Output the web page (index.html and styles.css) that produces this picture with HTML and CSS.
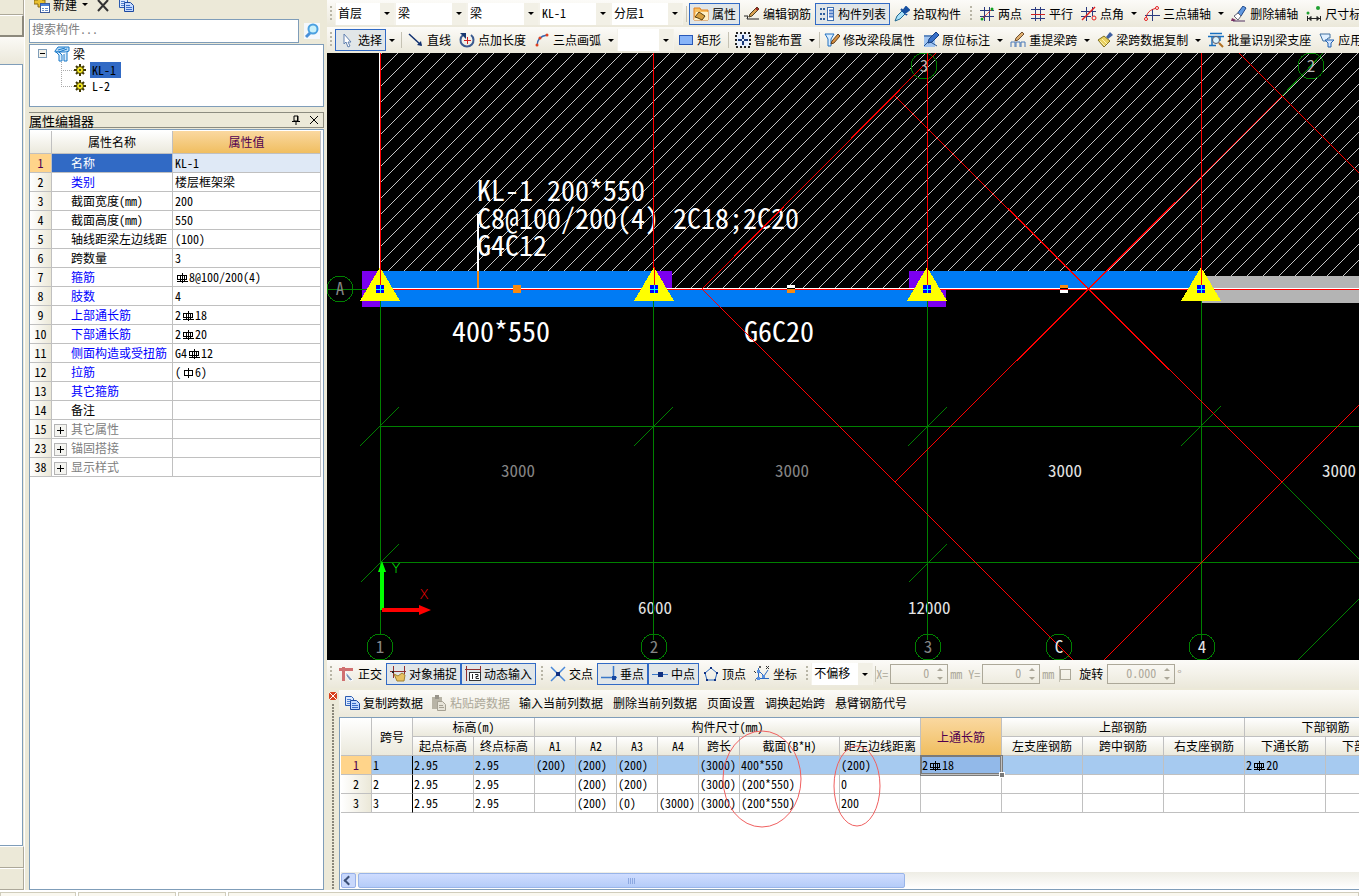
FILE: index.html
```html
<!DOCTYPE html>
<html lang="zh-CN">
<head>
<meta charset="utf-8">
<title>梁 - 属性编辑</title>
<link rel="stylesheet" href="styles.css">
</head>
<body>
<svg class="defs" aria-hidden="true">
  <defs>
    <symbol id="i-new" viewBox="0 0 16 16"><path d="M4 0h4v3h3v4H8v3H4V7H0V3h4z" fill="#e8c030" stroke="#8a6a10"/><rect x="6.500" y="6.500" width="9" height="9" fill="#fff" stroke="#3a5a9a"/><path d="M7 7h8v2H7z" fill="#4a80d8"/><path d="M8 11.500h2m1 0h3M8 13.500h2m1 0h3" stroke="#6a90c8"/></symbol>
    <symbol id="i-del" viewBox="0 0 16 16"><path d="M3 3l10 11M13 3L3 14" stroke="#333" stroke-width="2"/></symbol>
    <symbol id="i-copy" viewBox="0 0 16 16"><path d="M1.500 1.500h6l2 2v7h-8z" fill="#dce9ff" stroke="#2a5ab0"/><path d="M3 4.500h4M3 6.500h4M3 8.500h3" stroke="#5080d0"/><path d="M6.500 5.500h6l3 3v6h-9z" fill="#c4daff" stroke="#1c48a0"/><path d="M8 8.500h4M8 10.500h6M8 12.500h6" stroke="#3a6cc8"/></symbol>
    <symbol id="i-paste" viewBox="0 0 16 16"><rect x="1" y="2" width="10" height="12" fill="#b8b4a6"/><rect x="4" y="0" width="4" height="4" fill="#98948a"/><path d="M6.500 6.500h5l3 3v6h-8z" fill="#e6e3d8" stroke="#a5a193"/><path d="M8 10.500h4M8 12.500h5" stroke="#a5a193"/></symbol>
    <symbol id="i-find" viewBox="0 0 16 16"><rect width="16" height="16" fill="#f4f8fc"/><path d="M6 10l-4 4" stroke="#4a90d8" stroke-width="3"/><circle cx="9" cy="6" r="4.500" fill="#c8f0fa" stroke="#4aa0e0" stroke-width="2"/></symbol>
    <symbol id="i-beam" viewBox="0 0 16 16"><path d="M1 5l3-4h11v4l-3 1H1z" fill="#b8dcf8" stroke="#1878c8"/><path d="M2 6h3l3 3v6H5V9zM13 5v10h-3V8" fill="#d8ecfc" stroke="#1878c8"/><path d="M4 4l7-2M5 6l8-3" stroke="#1878c8"/></symbol>
    <symbol id="i-gear" viewBox="0 0 12 12"><path d="M6 0v12M0 6h12M2 2l8 8M10 2l-8 8" stroke="#403800" stroke-width="2"/><circle cx="6" cy="6" r="3.500" fill="#f4e820" stroke="#403800"/><circle cx="6" cy="6" r="1" fill="#222"/></symbol>
    <symbol id="i-prop" viewBox="0 0 16 16"><path d="M1 2h6l1 2h7v10H1z" fill="#f8c060" stroke="#e08020"/><path d="M3 6h12v8H1z" fill="#fff0c8"/><path d="M2 11l4-5 6 4-3 4-4-2z" fill="#d8a040" stroke="#584010"/></symbol>
    <symbol id="i-edit" viewBox="0 0 16 16"><path d="M0 10h4l-1 3h12" fill="none" stroke="#222"/><path d="M5 11l1-3 7-7 2 2-7 7z" fill="#d8a050" stroke="#504020"/><path d="M12 2l2 2" stroke="#a02020" stroke-width="2"/></symbol>
    <symbol id="i-list" viewBox="0 0 16 16"><path d="M1 3h2m1 0h2M1 8h2m1 0h2M1 13h2m1 0h2" stroke="#3060a0" stroke-width="2"/><rect x="8.500" y="1.500" width="6" height="13" fill="#fff" stroke="#4070b0"/><path d="M10 4.500h4M10 7.500h4M10 10.500h4" stroke="#4878c8" stroke-width="2"/></symbol>
    <symbol id="i-pick" viewBox="0 0 16 16"><path d="M1 15l2-5 5-5 3 3-5 5z" fill="#a8e0f8" stroke="#206890"/><path d="M7 3l6 6M9 5l3-4 3 3-4 3z" fill="#1850a0" stroke="#1850a0" stroke-width="2"/></symbol>
    <symbol id="i-two" viewBox="0 0 16 16"><path d="M5.500 1v14M10.500 1v14M1 4.500h14M1 10.500h14" stroke="#2a3a80"/><path d="M2 14L14 2" stroke="#e02020" stroke-dasharray="2 1"/><circle cx="3" cy="13" r="1.500" fill="#10a020"/><circle cx="13" cy="3" r="1.500" fill="#10a020"/></symbol>
    <symbol id="i-par" viewBox="0 0 16 16"><path d="M5.500 1v14M10.500 1v14" stroke="#2a3a80"/><path d="M1 3.500h14M1 12.500h14" stroke="#2a3a80"/><path d="M1 8.500h14" stroke="#d02020"/></symbol>
    <symbol id="i-ang" viewBox="0 0 16 16"><path d="M5.500 1v14M11.500 1v9M0 5.500h15M0 10.500h10" stroke="#2a3a80"/><path d="M1 14L14 1" stroke="#e02020" stroke-width="1.500"/><circle cx="13" cy="12" r="2" fill="none" stroke="#e02020"/></symbol>
    <symbol id="i-arc3" viewBox="0 0 16 16"><path d="M8.500 3v12M1 9.500h15" stroke="#2a3a80"/><path d="M2 14C2 7 6 3 14 2" fill="none" stroke="#e02020"/><circle cx="2" cy="13" r="1.500" fill="#fff" stroke="#e02020"/><circle cx="13" cy="2" r="1.500" fill="#fff" stroke="#e02020"/></symbol>
    <symbol id="i-erase" viewBox="0 0 16 16"><path d="M6 8l6-8 3 2-5 8z" fill="#6098e0" stroke="#20488a"/><path d="M3 10l4-3 3 3-3 4z" fill="#fff" stroke="#667"/><path d="M1 12l4 2-2 1H0z" fill="#803060"/><path d="M2 15h12" stroke="#503060"/></symbol>
    <symbol id="i-dim" viewBox="0 0 16 16"><path d="M1.500 10v5M14.500 10v5M2 12.500h12M3 12.500l2-2v4zM13 12.500l-2-2v4z" stroke="#222" fill="#222"/><circle cx="2" cy="7" r="1.500" fill="#20a030"/><circle cx="12" cy="2" r="2" fill="#20a030"/></symbol>
    <symbol id="i-cur" viewBox="0 0 16 16"><path d="M5 2v10l2-2 2 5 2-1-2-4h3z" fill="#fff" stroke="#6080b0"/></symbol>
    <symbol id="i-line" viewBox="0 0 16 16"><path d="M1 2l12 11" stroke="#103070" stroke-width="1.500"/><path d="M14 14l-5-1 4-4z" fill="#103070"/></symbol>
    <symbol id="i-rot" viewBox="0 0 16 16"><path d="M12 3a6.500 6.500 0 1 1-8 0" fill="none" stroke="#3a5a90" stroke-width="2"/><path d="M1 1h6v6z" fill="#183870"/><path d="M8.500 5v7M5 8.500h7" stroke="#d02020"/></symbol>
    <symbol id="i-arc" viewBox="0 0 16 16"><path d="M3 14C3 8 6 4 13 3" fill="none" stroke="#3868b0" stroke-width="1.500"/><circle cx="3" cy="13" r="1.500" fill="#e04020"/><circle cx="6" cy="6" r="1.500" fill="#e04020"/><circle cx="13" cy="3" r="1.500" fill="#e04020"/></symbol>
    <symbol id="i-rect" viewBox="0 0 16 16"><rect x="1.500" y="3.500" width="13" height="9" fill="#88b4f8" stroke="#2858b8"/></symbol>
    <symbol id="i-smart" viewBox="0 0 16 16"><rect x="1" y="1" width="14" height="14" fill="#e8f0fc" stroke="#222" stroke-width="2" stroke-dasharray="2 2"/><path d="M8 3v4M8 9v4M3 8h4M9 8h4" stroke="#183878" stroke-width="2"/></symbol>
    <symbol id="i-mod" viewBox="0 0 16 16"><path d="M1 2h9l-3 5v7H4V7z" fill="#d8ecff" stroke="#2070c0"/><path d="M7 12l1-3 6-7 2 2-6 7z" fill="#d89040" stroke="#604020"/></symbol>
    <symbol id="i-mark" viewBox="0 0 16 16"><path d="M1 3h11v12H1z" fill="#a0c4f0"/><path d="M1 14l5-5 8 5M1 4h8" stroke="#205090" fill="none"/><path d="M5 11l1-4 7-7 3 3-7 7z" fill="#3870c8" stroke="#184080"/></symbol>
    <symbol id="i-span" viewBox="0 0 16 16"><path d="M1 15v-5h4v5M6 15v-5h4v5M11 15v-5h4v5" fill="none" stroke="#4878b8"/><path d="M5 9l1-3 6-6 2 2-6 6z" fill="#e0b070" stroke="#705030"/></symbol>
    <symbol id="i-brush" viewBox="0 0 16 16"><path d="M9 5l4-5 3 3-5 4z" fill="#4060a0"/><path d="M7 4l6 5-6 6-6-7z" fill="#e8d060" stroke="#807020"/><path d="M3 9l5 5M5 7l5 5" stroke="#fff4b0"/></symbol>
    <symbol id="i-batch" viewBox="0 0 16 16"><path d="M2 1.500h12M0 4.500h16M4 5v8M12 5v4M1 13.500h7" stroke="#1870c0" stroke-width="1.500"/><circle cx="8" cy="8" r="3.500" fill="#d8f4ff" stroke="#556"/><path d="M11 11l4 4" stroke="#b07020" stroke-width="2"/></symbol>
    <symbol id="i-apply" viewBox="0 0 16 16"><path d="M1 2h10v4H9l-2 3H4z" fill="#e0f0ff" stroke="#4070a0"/><path d="M6 8h9l-3 3v4H9v-4z" fill="#d0e4ff" stroke="#2060b0"/></symbol>
    <symbol id="i-ortho" viewBox="0 0 16 16"><path d="M0 3.500h14M4.500 1v14" stroke="#d07070" stroke-width="3"/><path d="M7 6l7 8-3 1-4-5z" fill="#8098b8" stroke="#fff"/></symbol>
    <symbol id="i-snap" viewBox="0 0 16 16"><path d="M3.500 0v12M14.500 0v8M0 5.500h16" stroke="#903030"/><path d="M4 8l4 2 4-3 3 2-1 6H7z" fill="#e8c060" stroke="#a08030"/><rect x="2" y="5" width="2" height="2" fill="#222"/></symbol>
    <symbol id="i-dyn" viewBox="0 0 16 16"><path d="M1.500 0v15M15.500 0v6M0 3.500h16" stroke="#903030"/><rect x="4.500" y="6.500" width="11" height="8" fill="#fff" stroke="#333"/><path d="M7.500 8v5M10 8.500h3v2h-2v2h3" stroke="#222" fill="none"/></symbol>
    <symbol id="i-int" viewBox="0 0 16 16"><path d="M1 1l14 14M15 1L1 15" stroke="#4a88d8" stroke-width="1.500"/><rect x="6" y="6" width="4" height="4" fill="#103080"/></symbol>
    <symbol id="i-perp" viewBox="0 0 16 16"><path d="M12.500 0v11M0 11.500h16" stroke="#3a78c8" stroke-width="1.500"/><rect x="11" y="10" width="4" height="4" fill="#1848a0"/></symbol>
    <symbol id="i-mid" viewBox="0 0 16 16"><path d="M0 8.500h16" stroke="#3a78c8"/><rect x="6" y="6" width="5" height="5" fill="#103080"/></symbol>
    <symbol id="i-vert" viewBox="0 0 16 16"><path d="M8 2l6 5-2 7H4L2 7z" fill="none" stroke="#2a68c0"/><path d="M7 1h2v2H7zM13 6h2v2h-2zM1 6h2v2H1zM3 13h2v2H3zM11 13h2v2h-2z" fill="#103080"/></symbol>
    <symbol id="i-coord" viewBox="0 0 16 16"><path d="M4.500 2v12M2 12.500h13M5 5l5 5 4-6" fill="none" stroke="#2a68c0"/><path d="M3 4h3v3H3zM8 9h3v3H8zM3 11h3v3H3z" fill="#5890e0"/><circle cx="6" cy="1" r="1" fill="#333"/><path d="M12 0l3 3M15 0l-3 3M0 5l2 2M1 14h1" stroke="#333"/></symbol>
    <symbol id="i-pin" viewBox="0 0 10 10"><path d="M3 1h4v5H3zM1 6.500h8M5 7v3M6.500 1v5" fill="none" stroke="#000"/></symbol>
    <symbol id="i-x" viewBox="0 0 10 10"><path d="M1 1l8 8M9 1L1 9" stroke="#000"/></symbol>
    <symbol id="i-bar" viewBox="0 0 12 12"><path d="M1.500 3.500h9v4h-9zM6.500 1v10M1 9.500h11M4.500 3.500v6M8.500 3.500v6" fill="none" stroke="#000" shape-rendering="crispEdges"/></symbol>
    <symbol id="i-phi" viewBox="0 0 12 12"><path d="M2.500 3.500h8v5h-8zM6.500 1v10" fill="none" stroke="#000" shape-rendering="crispEdges"/></symbol>
    <symbol id="support" viewBox="0 0 40 34"><path d="M20 0l20 34H0z" fill="#ff0" shape-rendering="crispEdges"/><path d="M20.500 0v20" stroke="#f00"/><rect x="16" y="18" width="8" height="8" fill="#00f"/><path d="M16 22.500h8M20.500 18v8" stroke="#0ff"/></symbol>
    <pattern id="hatch" width="16" height="16" patternUnits="userSpaceOnUse"><path d="M-1 4L4 -1M2 17L17 2" stroke="#c4c4c4" shape-rendering="crispEdges"/></pattern>
  </defs>
</svg>

<div class="app">
  <div class="main">
    <div class="rail">
      <div class="rail-top"></div>
      <div class="rail-btn"></div>
      <div class="rail-head"></div>
      <div class="rail-body"></div>
      <div class="rail-tab"></div>
      <div class="rail-tab"></div>
    </div>

    <aside class="side">
      <div class="side-tools">
        <button class="flat"><svg class="ic"><use href="#i-new"/></svg>新建<i class="tri"></i></button>
        <button class="flat" aria-label="删除"><svg class="ic"><use href="#i-del"/></svg></button>
        <button class="flat" aria-label="复制"><svg class="ic"><use href="#i-copy"/></svg></button>
      </div>
      <div class="search">
        <input type="text" placeholder="搜索构件..." aria-label="搜索构件">
        <button class="flat" aria-label="搜索"><svg class="ic"><use href="#i-find"/></svg></button>
      </div>
      <div class="tree">
        <div class="node root"><span class="minus"></span><svg class="ic"><use href="#i-beam"/></svg><span>梁</span></div>
        <ul class="kids">
          <li class="node"><i class="twig"></i><svg class="ic12"><use href="#i-gear"/></svg><span class="name on">KL-1</span></li>
          <li class="node"><i class="twig"></i><svg class="ic12"><use href="#i-gear"/></svg><span class="name">L-2</span></li>
        </ul>
      </div>
      <div class="title"><span>属性编辑器</span><button class="flat" aria-label="固定"><svg class="ic10"><use href="#i-pin"/></svg></button><button class="flat" aria-label="关闭"><svg class="ic10"><use href="#i-x"/></svg></button></div>
      <div class="editor">
        <table class="grid props">
          <colgroup><col class="p-num"><col class="p-name"><col></colgroup>
          <thead><tr><th></th><th>属性名称</th><th class="hot">属性值</th></tr></thead>
          <tbody>
            <tr class="cur"><th>1</th><td>名称</td><td>KL-1</td></tr>
            <tr><th>2</th><td class="blue">类别</td><td>楼层框架梁</td></tr>
            <tr><th>3</th><td>截面宽度(mm)</td><td>200</td></tr>
            <tr><th>4</th><td>截面高度(mm)</td><td>550</td></tr>
            <tr><th>5</th><td>轴线距梁左边线距</td><td>(100)</td></tr>
            <tr><th>6</th><td>跨数量</td><td>3</td></tr>
            <tr><th>7</th><td class="blue">箍筋</td><td><svg class="ic12"><use href="#i-bar"/></svg>8@100/200(4)</td></tr>
            <tr><th>8</th><td class="blue">肢数</td><td>4</td></tr>
            <tr><th>9</th><td class="blue">上部通长筋</td><td>2<svg class="ic12"><use href="#i-bar"/></svg>18</td></tr>
            <tr><th>10</th><td class="blue">下部通长筋</td><td>2<svg class="ic12"><use href="#i-bar"/></svg>20</td></tr>
            <tr><th>11</th><td class="blue">侧面构造或受扭筋</td><td>G4<svg class="ic12"><use href="#i-bar"/></svg>12</td></tr>
            <tr><th>12</th><td class="blue">拉筋</td><td>(<svg class="ic12"><use href="#i-phi"/></svg>6)</td></tr>
            <tr><th>13</th><td class="blue">其它箍筋</td><td></td></tr>
            <tr><th>14</th><td>备注</td><td></td></tr>
            <tr><th>15</th><td class="fold"><button class="plus" aria-label="展开"></button>其它属性</td><td></td></tr>
            <tr><th>23</th><td class="fold"><button class="plus" aria-label="展开"></button>锚固搭接</td><td></td></tr>
            <tr><th>38</th><td class="fold"><button class="plus" aria-label="展开"></button>显示样式</td><td></td></tr>
          </tbody>
        </table>
      </div>
    </aside>

    <main class="work">
      <div class="bar">
        <i class="grip"></i>
        <label class="combo floor"><select aria-label="楼层"><option>首层</option></select></label>
        <label class="combo"><select aria-label="构件类别"><option>梁</option></select></label>
        <label class="combo"><select aria-label="构件类型"><option>梁</option></select></label>
        <label class="combo"><select aria-label="构件"><option>KL-1</option></select></label>
        <label class="combo"><select aria-label="分层"><option>分层1</option></select></label>
        <i class="sep"></i>
        <button class="tool on"><svg class="ic"><use href="#i-prop"/></svg>属性</button>
        <button class="tool"><svg class="ic"><use href="#i-edit"/></svg>编辑钢筋</button>
        <button class="tool on"><svg class="ic"><use href="#i-list"/></svg>构件列表</button>
        <button class="tool"><svg class="ic"><use href="#i-pick"/></svg>拾取构件</button>
        <i class="grip next"></i>
        <button class="tool"><svg class="ic"><use href="#i-two"/></svg>两点</button>
        <button class="tool"><svg class="ic"><use href="#i-par"/></svg>平行</button>
        <button class="tool"><svg class="ic"><use href="#i-ang"/></svg>点角</button><button class="drop" aria-label="更多"></button>
        <button class="tool"><svg class="ic"><use href="#i-arc3"/></svg>三点辅轴</button><button class="drop" aria-label="更多"></button>
        <button class="tool"><svg class="ic"><use href="#i-erase"/></svg>删除辅轴</button>
        <button class="tool"><svg class="ic"><use href="#i-dim"/></svg>尺寸标注</button>
      </div>
      <div class="bar">
        <i class="grip"></i>
        <button class="tool on"><svg class="ic"><use href="#i-cur"/></svg>选择</button><button class="drop" aria-label="更多"></button>
        <i class="sep"></i>
        <button class="tool"><svg class="ic"><use href="#i-line"/></svg>直线</button>
        <button class="tool"><svg class="ic"><use href="#i-rot"/></svg>点加长度</button>
        <button class="tool"><svg class="ic"><use href="#i-arc"/></svg>三点画弧</button><button class="drop" aria-label="更多"></button>
        <label class="combo small"><select aria-label="画弧方式"><option></option></select></label>
        <button class="tool"><svg class="ic"><use href="#i-rect"/></svg>矩形</button>
        <i class="sep"></i>
        <button class="tool"><svg class="ic"><use href="#i-smart"/></svg>智能布置</button><button class="drop" aria-label="更多"></button>
        <i class="sep tight"></i>
        <button class="tool"><svg class="ic"><use href="#i-mod"/></svg>修改梁段属性</button>
        <button class="tool"><svg class="ic"><use href="#i-mark"/></svg>原位标注</button><button class="drop" aria-label="更多"></button>
        <button class="tool"><svg class="ic"><use href="#i-span"/></svg>重提梁跨</button><button class="drop" aria-label="更多"></button>
        <button class="tool"><svg class="ic"><use href="#i-brush"/></svg>梁跨数据复制</button><button class="drop" aria-label="更多"></button>
        <button class="tool"><svg class="ic"><use href="#i-batch"/></svg>批量识别梁支座</button>
        <button class="tool"><svg class="ic"><use href="#i-apply"/></svg>应用到同名梁</button>
      </div>

      <div class="canvas">
        <svg class="drawing" role="img" aria-label="梁平面图">
          <g transform="translate(-327 -53)">
            <rect x="380" y="53" width="3000" height="236" fill="url(#hatch)"/>
            <g shape-rendering="crispEdges">
              <path d="M362 271h18v36h-18zM653 271h19v18h-19zM909 271h18v18h-18zM927 289h19v18h-19z" fill="#7b00f0"/>
              <path d="M380 271h273v18h274v18H380zM927 271h274v18H927z" fill="#007bf4"/>
              <path d="M1201 276h2200v27H1201z" fill="#b4b4b4"/>
            </g>
            <g class="label">
              <text x="477" y="201">KL-1 200*550</text>
              <text x="477" y="229">C8@100/200(4)</text>
              <text x="673" y="229">2C18;2C20</text>
              <text x="477" y="256">G4C12</text>
              <text x="452" y="342">400*550</text>
              <text x="744" y="342">G6C20</text>
            </g>
            <g class="dim">
              <text x="501" y="477" class="dull">3000</text>
              <text x="775" y="477" class="dull">3000</text>
              <text x="1048" y="477">3000</text>
              <text x="1322" y="477">3000</text>
              <text x="638" y="614">6000</text>
              <text x="908" y="614">12000</text>
            </g>
            <g class="lines green">
              <path d="M380.500 289V634M653.500 289V640M927.500 289V640M1201.500 289V640M327 289.500H380M380 426.500H3000M380 562.500H3000"/>
              <path d="M360 446l39-39M634 446l39-39M908 446l39-39M1181 446l40-40M361 582l38-38M909 582l38-38M1282 96l41-43M1282 482l400 400M1359 599l-61 61"/>
              <circle cx="380" cy="647" r="13"/><circle cx="654" cy="647" r="13"/><circle cx="928" cy="647" r="13"/><circle cx="1059" cy="647" r="13"/><circle cx="1202" cy="647" r="13"/><circle cx="340" cy="289" r="13"/><circle cx="924" cy="66" r="13"/><circle cx="1311" cy="66" r="13"/>
            </g>
            <path class="lines white" d="M379.500 53V289M380 288.500H3000"/>
            <path class="lines white" stroke-width="2" d="M478 214V271"/>
            <path class="lines orange" stroke-width="2" d="M478 271V288"/>
            <path class="lines red" d="M380.500 53V289M653.500 53V289M927.500 53V289M1201.500 53V289M380 289.500H3000M936 53L702 289L1073 660M895 96L1282 482M1239 53l400 400M1282 96L895 482M1359 405L1104 660"/>
            <g class="dim mid">
              <text x="340" y="295" class="dull">A</text>
              <text x="380" y="653" class="dull">1</text>
              <text x="654" y="653" class="dull">2</text>
              <text x="928" y="653" class="dull">3</text>
              <text x="1059" y="653">C</text>
              <text x="1202" y="653">4</text>
              <text x="924" y="72" class="pale">3</text>
              <text x="1311" y="72" class="pale">2</text>
            </g>
            <use href="#support" x="360" y="267" width="40" height="34"/>
            <use href="#support" x="634" y="267" width="40" height="34"/>
            <use href="#support" x="907" y="267" width="40" height="34"/>
            <use href="#support" x="1181" y="267" width="40" height="34"/>
            <path d="M513 285h8v8h-8zM787 289h8v4h-8zM1060 285h8v3h-8z" fill="#f88a10"/>
            <path d="M787 285h8v3h-8zM1060 290h8v3h-8z" fill="#fff"/>
            <path d="M787 288h8v1h-8zM1060 288h8v1h-8z" fill="#000"/>
            <path d="M380 570h4v40h-4zM382 561l4 11h-8z" fill="#0f0"/>
            <path d="M382 608h37v4h-37zM431 610l-12-5v10z" fill="#f00"/>
            <g class="axis"><text x="396" y="573" fill="#0f0">Y</text><text x="424" y="599" fill="#f00">X</text></g>
          </g>
        </svg>
      </div>

      <div class="snap">
        <i class="grip"></i>
        <button class="tool"><svg class="ic"><use href="#i-ortho"/></svg>正交</button>
        <button class="tool on"><svg class="ic"><use href="#i-snap"/></svg>对象捕捉</button>
        <button class="tool on"><svg class="ic"><use href="#i-dyn"/></svg>动态输入</button>
        <i class="grip next"></i>
        <button class="tool"><svg class="ic"><use href="#i-int"/></svg>交点</button>
        <button class="tool on"><svg class="ic"><use href="#i-perp"/></svg>垂点</button>
        <button class="tool on"><svg class="ic"><use href="#i-mid"/></svg>中点</button>
        <button class="tool"><svg class="ic"><use href="#i-vert"/></svg>顶点</button>
        <button class="tool"><svg class="ic"><use href="#i-coord"/></svg>坐标</button>
        <i class="grip next"></i>
        <label class="combo shift"><select aria-label="偏移"><option>不偏移</option></select></label>
        <i class="sep tight"></i>
        <label class="off">X=<span class="spin"><input type="text" value="0" disabled></span>mm</label>
        <label class="off last">Y=<span class="spin"><input type="text" value="0" disabled></span>mm</label>
        <i class="sep tight"></i>
        <label class="turn"><input type="checkbox">旋转</label>
        <label class="off"><span class="spin wide"><input type="text" value="0.000" aria-label="旋转角度" disabled></span>°</label>
      </div>

      <section class="dock">
        <div class="dock-grip"><button class="close" aria-label="关闭"></button><i></i></div>
        <div class="dock-main">
          <div class="dock-tools">
            <button class="tool"><svg class="ic"><use href="#i-copy"/></svg>复制跨数据</button>
            <button class="tool" disabled><svg class="ic"><use href="#i-paste"/></svg>粘贴跨数据</button>
            <button class="text">输入当前列数据</button>
            <button class="text">删除当前列数据</button>
            <button class="text">页面设置</button>
            <button class="text">调换起始跨</button>
            <button class="text">悬臂钢筋代号</button>
          </div>
          <div class="sheet">
            <table class="grid spans">
              <colgroup><col class="c30"><col class="c41"><col class="c61"><col class="c61"><col class="c41"><col class="c41"><col class="c41"><col class="c41"><col class="c41"><col class="c100"><col class="c81"><col class="c81"><col class="c81"><col class="c81"><col class="c81"><col class="c81"><col class="c81"></colgroup>
              <thead>
                <tr><th rowspan="2"></th><th rowspan="2">跨号</th><th colspan="2">标高(m)</th><th colspan="7">构件尺寸(mm)</th><th rowspan="2" class="hot">上通长筋</th><th colspan="3">上部钢筋</th><th colspan="2">下部钢筋</th></tr>
                <tr><th>起点标高</th><th>终点标高</th><th>A1</th><th>A2</th><th>A3</th><th>A4</th><th>跨长</th><th>截面(B*H)</th><th>距左边线距离</th><th>左支座钢筋</th><th>跨中钢筋</th><th>右支座钢筋</th><th>下通长筋</th><th>下部钢筋</th></tr>
              </thead>
              <tbody>
                <tr class="cur"><th>1</th><td class="fix">1</td><td>2.95</td><td>2.95</td><td>(200)</td><td>(200)</td><td>(200)</td><td></td><td>(3000)</td><td>400*550</td><td>(200)</td><td class="cell">2<svg class="ic12"><use href="#i-bar"/></svg>18<i class="knob"></i></td><td></td><td></td><td></td><td>2<svg class="ic12"><use href="#i-bar"/></svg>20</td><td></td></tr>
                <tr><th>2</th><td class="fix">2</td><td>2.95</td><td>2.95</td><td></td><td>(200)</td><td>(200)</td><td></td><td>(3000)</td><td>(200*550)</td><td>0</td><td></td><td></td><td></td><td></td><td></td><td></td></tr>
                <tr><th>3</th><td class="fix">3</td><td>2.95</td><td>2.95</td><td></td><td>(200)</td><td>(0)</td><td>(3000)</td><td>(3000)</td><td>(200*550)</td><td>200</td><td></td><td></td><td></td><td></td><td></td><td></td></tr>
              </tbody>
            </table>
            <svg class="rings" aria-hidden="true"><ellipse cx="422" cy="61" rx="39" ry="48"/><ellipse cx="517" cy="68" rx="23" ry="40"/></svg>
            <div class="scroll"><button class="left" aria-label="向左滚动"></button><div class="thumb"></div></div>
          </div>
        </div>
      </section>
    </main>
  </div>
  <footer class="status"><i class="s1"></i><i class="s2"></i><i class="s3"></i><i class="s4"></i></footer>
</div>
</body>
</html>
```
FILE: styles.css
```css
* { box-sizing: border-box; }
body {
  margin: 0;
  background: #ece9d8;
  color: #000;
  font: 12px/18px "Noto Sans CJK SC", "Liberation Mono", sans-serif;
  font-feature-settings: "hwid";
}
button, input, select { font: inherit; font-feature-settings: inherit; color: inherit; }
button { padding: 0; border: 0; background: none; white-space: nowrap; }
ul { list-style: none; margin: 0; padding: 0; }
.defs { position: absolute; width: 0; height: 0; }
.ic { width: 16px; height: 16px; flex: none; }
.ic12 { width: 12px; height: 12px; flex: none; vertical-align: -2px; }
.ic10 { width: 10px; height: 10px; flex: none; }

.app { display: flex; flex-direction: column; height: 100vh; overflow: hidden; }
.main { display: flex; flex: 1; min-height: 0; }

/* left rail */
.rail { width: 25px; flex: none; display: flex; flex-direction: column; border-right: 1px solid #fff; }
.rail-top { height: 15px; border-right: 1px solid #aca899; border-bottom: 1px solid #aca899; }
.rail-btn { height: 22px; border: 2px solid #8c897c; border-width: 1px 2px 2px 0; border-top-color: #fff; }
.rail-head { height: 27px; background: linear-gradient(#fbfaf6, #ebe8da); }
.rail-body { flex: 1; margin-right: 1px; background: #fff; border: 1px solid #7f9db9; border-left: 0; }
.rail-tab { height: 22px; border: 1px solid #aca899; border-left: 0; border-top-color: #fff; }

/* side panel */
.side { width: 302px; flex: none; display: flex; flex-direction: column; padding: 0 3px 0 4px; }
.flat { display: flex; align-items: center; gap: 3px; }
.side-tools { display: flex; gap: 7px; height: 9px; margin-bottom: 10px; padding-left: 5px; align-items: center; }
.tri { margin-left: 2px; border: 3px solid transparent; border-top-color: #000; border-bottom: 0; }
.search { display: flex; height: 24px; gap: 5px; align-items: center; }
.search input { flex: 1; height: 24px; min-width: 0; padding: 0 2px 6px; border: 1px solid #7f9db9; background: #fff; }
.search input::placeholder { color: #808080; }
.search .flat { width: 20px; }
.tree { height: 63px; margin-top: 1px; padding: 0 0 0 8px; background: #fff; border: 1px solid #7f9db9; line-height: 16px; }
.node { display: flex; align-items: center; height: 16px; }
.root { gap: 3px; height: 17px; }
.root .ic { margin-left: 4px; }
.minus { width: 9px; height: 9px; border: 1px solid #7f9db9; background: linear-gradient(#000, #000) center / 5px 1px no-repeat #f4f2ea; }
.kids { margin-left: 23px; }
.twig { width: 13px; height: 9px; flex: none; align-self: flex-start; border: 1px dotted #aaa; border-width: 0 0 1px 1px; }
.node + .node .twig { height: 17px; margin-top: -8px; }
.kids .ic12 { margin-right: 4px; }
.name { width: 31px; flex: none; padding-left: 2px; }
.name.on { background: #316ac5; }
.title { display: flex; align-items: center; gap: 8px; height: 16px; margin-top: 5px; padding-right: 4px; border: 1px solid #8c8c80; border-left: 0; line-height: 13px; }
.title span { flex: 1; font-size: 13px; }
.editor { flex: 1; margin-top: 1px; padding-top: 1px; background: #fff; border: 1px solid #7f9db9; }

/* tables */
.grid { border-collapse: separate; border-spacing: 0; table-layout: fixed; background: #fff; }
.grid th, .grid td { height: 19px; padding: 0 0 0 2px; border: solid #c0c0c0; border-width: 0 1px 1px 0; overflow: hidden; white-space: nowrap; font-weight: 400; text-align: left; }
.grid th { padding: 0; text-align: center; background: linear-gradient(#fff, #ebe9dc); }
.grid tbody th { background: linear-gradient(90deg, #fff, #ebe8d8); }
.grid th.hot { background: linear-gradient(#fad8a0, #f0be60); color: #500050; }
.grid .cur th { background: #ffd48a; color: #500050; }
.grid .ic12 { margin: 0 1px; }
.props { width: calc(100% - 2px); }
.p-num { width: 22px; }
.p-name { width: 121px; }
.props thead th { height: 23px; }
.props td:nth-child(2) { padding-left: 19px; }
.props .cur td { background: #dfe9f6; }
.props .cur td:nth-child(2) { background: #316ac5; color: #fff; }
.blue { color: #00f; }
.props td.fold { padding-left: 2px; color: #808080; }
.plus { width: 13px; height: 13px; margin-right: 4px; vertical-align: -2px; border: 1px solid #b4b4b4; background: linear-gradient(#000, #000) center / 7px 1px no-repeat, linear-gradient(#000, #000) center / 1px 7px no-repeat, #f4f4f0; }

/* toolbars */
.bar, .snap { display: flex; align-items: center; height: 27px; flex: none; overflow: hidden; background: linear-gradient(#fcfbf8, #ebe8da); }
.bar + .bar { height: 26px; }
.bar > *, .snap > *, .dock-tools > * { flex: none; }
.grip { width: 8px; height: 16px; background: radial-gradient(circle at 1px 1px, #b8b5a6 1px, transparent 1px) 3px 0 / 5px 4px repeat-y; }
.grip.next { margin-left: 2px; }
.sep { width: 6px; height: 16px; background: linear-gradient(#c5c2b4, #c5c2b4) center / 1px 100% no-repeat; }
.sep.tight { width: 2px; }
.tool { display: flex; align-items: center; gap: 3px; height: 22px; padding: 0 3px; border: 1px solid transparent; }
.tool.on { border-color: #316ac5; background: #e1e6e8; }
.tool:disabled { color: #aca899; }
.drop { width: 12px; height: 22px; display: flex; align-items: center; justify-content: center; }
.drop::after, .combo::after { content: ""; border: 3px solid transparent; border-top-color: #000; border-bottom: 0; }
.combo { display: flex; align-items: center; width: 72px; height: 22px; padding-right: 4px; border: 1px solid #f4f2ea; border-width: 0 1px; background: linear-gradient(90deg, #fff calc(100% - 14px), #f2f0e6 0); }
.combo select { flex: 1; min-width: 0; padding: 0 0 2px 2px; appearance: none; border: 0; background: none; }
.floor { width: 60px; }
.small { width: 57px; }
.shift { width: 62px; margin-right: 1px; }

/* drawing */
.canvas { flex: 1; min-height: 0; background: #000; overflow: hidden; }
.drawing { display: block; width: 100%; height: 100%; }
.lines { fill: none; shape-rendering: crispEdges; }
.green { stroke: #008000; }
.white { stroke: #fff; }
.red { stroke: #f00; }
.orange { stroke: #f88a10; }
.label { font-size: 28px; fill: #fff; }
.dim { font-size: 17px; fill: #e4e4e4; }
.dim .dull { fill: #858585; }
.dim .pale { fill: #b8b8b8; }
.mid, .axis { text-anchor: middle; }
.axis { font: 300 14px "DejaVu Sans", sans-serif; font-feature-settings: normal; }

.work { flex: 1; min-width: 0; display: flex; flex-direction: column; }
.snap { height: 28px; margin-bottom: 2px; background: linear-gradient(#fcfbf8, #ebe8da); }
.off { display: flex; align-items: center; gap: 2px; margin-right: 6px; color: #aca899; }
.off.last { margin-right: 4px; }
.spin { position: relative; display: flex; width: 58px; height: 20px; border: 1px solid #aca899; }
.spin.wide { width: 68px; }
.spin input { flex: 1; min-width: 0; padding: 0 18px 2px 0; border: 0; background: none; text-align: right; color: inherit; }
.spin::before, .spin::after { content: ""; position: absolute; right: 4px; border: 3px solid transparent; }
.spin::before { top: 3px; border-bottom-color: #aca899; border-top: 0; }
.spin::after { bottom: 3px; border-top-color: #aca899; border-bottom: 0; }
.turn { display: flex; align-items: center; gap: 8px; margin-right: 4px; }
.turn input { appearance: none; width: 11px; height: 11px; margin: 0; border: 1px solid #aca899; }

/* span table dock */
.dock { display: flex; height: 200px; flex: none; }
.dock-grip { width: 12px; flex: none; display: flex; flex-direction: column; align-items: center; gap: 4px; padding-top: 2px; }
.close { width: 8px; height: 8px; border-radius: 2px; background: linear-gradient(45deg, transparent 45%, #fff 45% 55%, transparent 55%), linear-gradient(-45deg, transparent 45%, #fff 45% 55%, transparent 55%), #d8401c; }
.dock-grip i { flex: 1; width: 2px; background: repeating-linear-gradient(#8a877a 0 2px, transparent 2px 3px); }
.dock-main { flex: 1; min-width: 0; display: flex; flex-direction: column; }
.dock-tools { display: flex; align-items: center; height: 27px; flex: none; padding: 0 0 2px 1px; background: linear-gradient(#fcfbf8, #ebe8da); }
.text { height: 22px; padding: 0 5px; }
.sheet { position: relative; flex: 1; min-height: 0; display: flex; flex-direction: column; justify-content: space-between; padding-left: 1px; border: 1px solid #7f9db9; border-right: 0; background: #fff; overflow: hidden; }
.spans { width: 1065px; }
.spans tbody td { padding: 0 0 0 1px; }
.c30 { width: 31px; }
.c41 { width: 41px; }
.c61 { width: 61px; }
.c81 { width: 81px; }
.c100 { width: 100px; }
.grid td.fix { border-right-color: #000; }
.spans .cur td { background: #a6caf0; }
.spans .cur td.cell { position: relative; overflow: visible; background: #92b9e9; box-shadow: inset 0 0 0 1px #7a7a7a, 0 0 0 1px #7a7a7a; }
.knob { position: absolute; right: -4px; bottom: -4px; width: 6px; height: 6px; border: 1px solid #fff; background: #7a7a7a; }
.rings { position: absolute; left: 0; top: 0; width: 600px; height: 120px; fill: none; stroke: #f06060; }
.scroll { display: flex; gap: 2px; height: 17px; padding: 1px 0; background: linear-gradient(#eeede5, #fff); }
.left { width: 15px; height: 15px; display: flex; align-items: center; justify-content: center; border: 1px solid #98b0e8; border-radius: 2px; background: #c8d8fc; }
.left::after { content: ""; width: 5px; height: 5px; border: solid #3c5078; border-width: 0 0 2px 2px; transform: rotate(45deg); }
.thumb { width: 547px; border: 1px solid #98b4e8; border-radius: 2px; background: repeating-linear-gradient(90deg, #8ca8e0 0 1px, transparent 1px 2px) center / 8px 6px no-repeat, linear-gradient(#cfdcff, #b4ccf8); }

/* status bar */
.status { display: flex; gap: 2px; height: 6px; flex: none; padding-top: 2px; background: #fff; }
.status i { border: 1px solid #d0cdbc; border-bottom: 0; background: #faf8f0; }
.s1 { width: 76px; }
.s2 { width: 98px; }
.s3 { width: 48px; }
.s4 { flex: 1; }
```
